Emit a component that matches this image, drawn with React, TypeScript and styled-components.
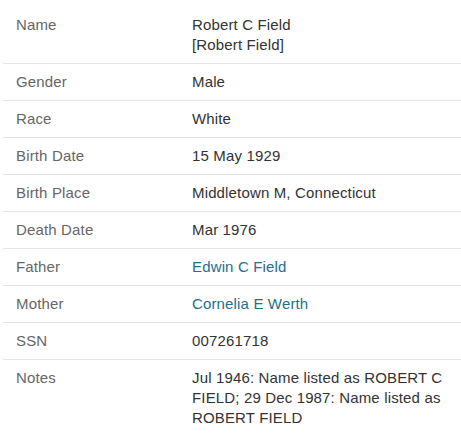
import React from "react";
import styled, { createGlobalStyle } from "styled-components";

const Global = createGlobalStyle`
  html, body { margin: 0; padding: 0; background: #fff; }
  body { font-family: "Liberation Sans", Arial, sans-serif; }
`;

const Table = styled.div`
  display: flex;
  flex-direction: column;
  padding: 7px 0 0 3px;
`;

const Row = styled.div<{ $last?: boolean }>`
  display: grid;
  grid-template-columns: 176px 1fr;
  padding: 8px 8px 8px 13px;
  border-bottom: ${(p) => (p.$last ? "none" : "1px solid #e3e3e3")};
  font-size: 15px;
  line-height: 20px;
  letter-spacing: 0.15px;
`;

const Label = styled.div`
  color: #666;
`;

const Value = styled.div`
  color: #333;
  max-width: 256px;
`;

const Link = styled.a`
  color: #1f6f8d;
  text-decoration: none;
`;

type Item = { label: string; value: React.ReactNode };

const items: Item[] = [
  {
    label: "Name",
    value: (
      <>
        Robert C Field
        <br />
        [Robert Field]
      </>
    ),
  },
  { label: "Gender", value: "Male" },
  { label: "Race", value: "White" },
  { label: "Birth Date", value: "15 May 1929" },
  { label: "Birth Place", value: "Middletown M, Connecticut" },
  { label: "Death Date", value: "Mar 1976" },
  { label: "Father", value: <Link href="#">Edwin C Field</Link> },
  { label: "Mother", value: <Link href="#">Cornelia E Werth</Link> },
  { label: "SSN", value: "007261718" },
  {
    label: "Notes",
    value:
      "Jul 1946: Name listed as ROBERT C FIELD; 29 Dec 1987: Name listed as ROBERT FIELD",
  },
];

export default function App() {
  return (
    <>
      <Global />
      <Table>
        {items.map((it, i) => (
          <Row key={it.label} $last={i === items.length - 1}>
            <Label>{it.label}</Label>
            <Value>{it.value}</Value>
          </Row>
        ))}
      </Table>
    </>
  );
}
